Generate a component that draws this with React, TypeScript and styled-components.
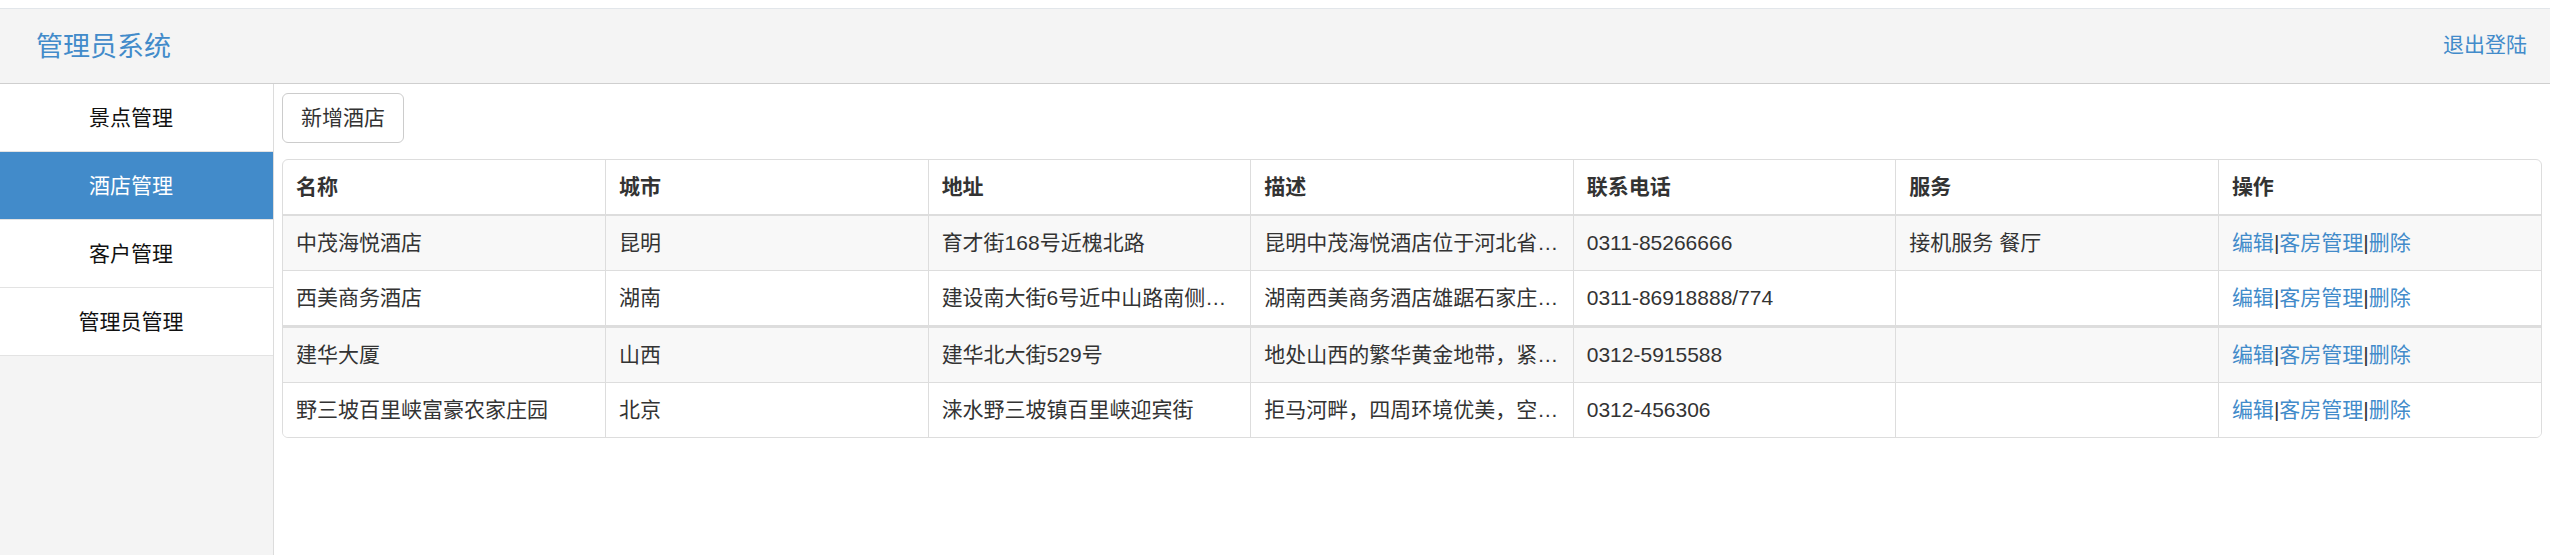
import React from "react";
import styled, { createGlobalStyle } from "styled-components";

const GlobalStyle = createGlobalStyle`
  html, body {
    margin: 0;
    padding: 0;
    background: #fff;
  }
  body {
    font-family: "Liberation Sans", "Noto Sans CJK SC", sans-serif;
    font-size: 21px;
    line-height: 30px;
    color: #333;
  }
  * {
    box-sizing: border-box;
  }
`;

const Page = styled.div`
  display: flex;
  flex-direction: column;
  min-height: 100vh;
  padding-top: 8px;
`;

const Header = styled.header`
  display: flex;
  align-items: center;
  justify-content: space-between;
  height: 76px;
  background-color: #f4f4f4;
  border-top: 1px solid #e2e6ea;
  border-bottom: 1px solid #cfcfcf;
  padding: 0 23px 0 36px;
`;

const Brand = styled.a`
  font-size: 27px;
  line-height: 30px;
  color: #428bca;
  text-decoration: none;
  padding-top: 2px;
`;

const Logout = styled.a`
  font-size: 21px;
  color: #428bca;
  text-decoration: none;
  padding-bottom: 2px;
`;

const Body = styled.div`
  display: flex;
  flex: 1;
`;

const Sidebar = styled.nav`
  width: 274px;
  flex-shrink: 0;
  background-color: #f4f4f4;
  border-right: 1px solid #dcdcdc;
`;

const NavItem = styled.a<{ $active?: boolean }>`
  display: block;
  padding: 19px 11px 18px 0;
  line-height: 30px;
  text-align: center;
  font-size: 21px;
  text-decoration: none;
  color: ${props => (props.$active ? "#fff" : "#111")};
  background-color: ${props => (props.$active ? "#428bca" : "#fff")};
  border-bottom: 1px solid #e3e3e3;
`;

const Main = styled.main`
  flex: 1;
  min-width: 0;
  padding: 9px 8px 0 8px;
`;

const Button = styled.button`
  display: block;
  font-family: inherit;
  font-size: 21px;
  line-height: 30px;
  color: #333;
  background-color: #fff;
  border: 1px solid #ccc;
  border-radius: 6px;
  padding: 9px 18px;
  margin-bottom: 16px;
`;

const TableWrap = styled.div`
  border: 1px solid #ddd;
  border-radius: 6px;
  overflow: hidden;
`;

const Table = styled.table`
  width: 100%;
  table-layout: fixed;
  border-collapse: collapse;

  tbody + tbody {
    border-top: 3px solid #ddd;
  }
`;

const Th = styled.th`
  text-align: left;
  font-weight: bold;
  padding: 12px 13px;
  line-height: 30px;
  border-bottom: 2px solid #ddd;
  border-left: 1px solid #ddd;

  &:first-child {
    border-left: none;
  }
`;

const Row = styled.tr<{ $striped?: boolean }>`
  background-color: ${props => (props.$striped ? "#f8f8f8" : "#fff")};
`;

const Td = styled.td`
  padding: 12px 13px;
  line-height: 30px;
  border-top: 1px solid #ddd;
  border-left: 1px solid #ddd;
  white-space: nowrap;
  overflow: hidden;
  text-overflow: ellipsis;

  &:first-child {
    border-left: none;
  }
`;

const Link = styled.a`
  color: #428bca;
  text-decoration: none;
`;

const Sep = styled.span`
  color: #333;
`;

type Hotel = {
  name: string;
  city: string;
  address: string;
  desc: string;
  phone: string;
  service: string;
};

const hotels: Hotel[] = [
  {
    name: "中茂海悦酒店",
    city: "昆明",
    address: "育才街168号近槐北路",
    desc: "昆明中茂海悦酒店位于河北省会石家庄市中心",
    phone: "0311-85266666",
    service: "接机服务 餐厅"
  },
  {
    name: "西美商务酒店",
    city: "湖南",
    address: "建设南大街6号近中山路南侧沿街",
    desc: "湖南西美商务酒店雄踞石家庄市中心繁华地段",
    phone: "0311-86918888/774",
    service: ""
  },
  {
    name: "建华大厦",
    city: "山西",
    address: "建华北大街529号",
    desc: "地处山西的繁华黄金地带，紧邻市中心商业区",
    phone: "0312-5915588",
    service: ""
  },
  {
    name: "野三坡百里峡富豪农家庄园",
    city: "北京",
    address: "涞水野三坡镇百里峡迎宾街",
    desc: "拒马河畔，四周环境优美，空气清新宜人",
    phone: "0312-456306",
    service: ""
  }
];

const columns = ["名称", "城市", "地址", "描述", "联系电话", "服务", "操作"];

const HotelRow = ({ hotel, striped }: { hotel: Hotel; striped: boolean }) => (
  <Row $striped={striped}>
    <Td>{hotel.name}</Td>
    <Td>{hotel.city}</Td>
    <Td>{hotel.address}</Td>
    <Td>{hotel.desc}</Td>
    <Td>{hotel.phone}</Td>
    <Td>{hotel.service}</Td>
    <Td>
      <Link href="#">编辑</Link>
      <Sep>|</Sep>
      <Link href="#">客房管理</Link>
      <Sep>|</Sep>
      <Link href="#">删除</Link>
    </Td>
  </Row>
);

const navItems = ["景点管理", "酒店管理", "客户管理", "管理员管理"];

export default function App() {
  return (
    <>
      <GlobalStyle />
      <Page>
        <Header>
          <Brand href="#">管理员系统</Brand>
          <Logout href="#">退出登陆</Logout>
        </Header>
        <Body>
          <Sidebar>
            {navItems.map(item => (
              <NavItem key={item} href="#" $active={item === "酒店管理"}>
                {item}
              </NavItem>
            ))}
          </Sidebar>
          <Main>
            <Button>新增酒店</Button>
            <TableWrap>
              <Table>
                <thead>
                  <tr>
                    {columns.map(c => (
                      <Th key={c}>{c}</Th>
                    ))}
                  </tr>
                </thead>
                <tbody>
                  <HotelRow hotel={hotels[0]} striped />
                  <HotelRow hotel={hotels[1]} striped={false} />
                </tbody>
                <tbody>
                  <HotelRow hotel={hotels[2]} striped />
                  <HotelRow hotel={hotels[3]} striped={false} />
                </tbody>
              </Table>
            </TableWrap>
          </Main>
        </Body>
      </Page>
    </>
  );
}
